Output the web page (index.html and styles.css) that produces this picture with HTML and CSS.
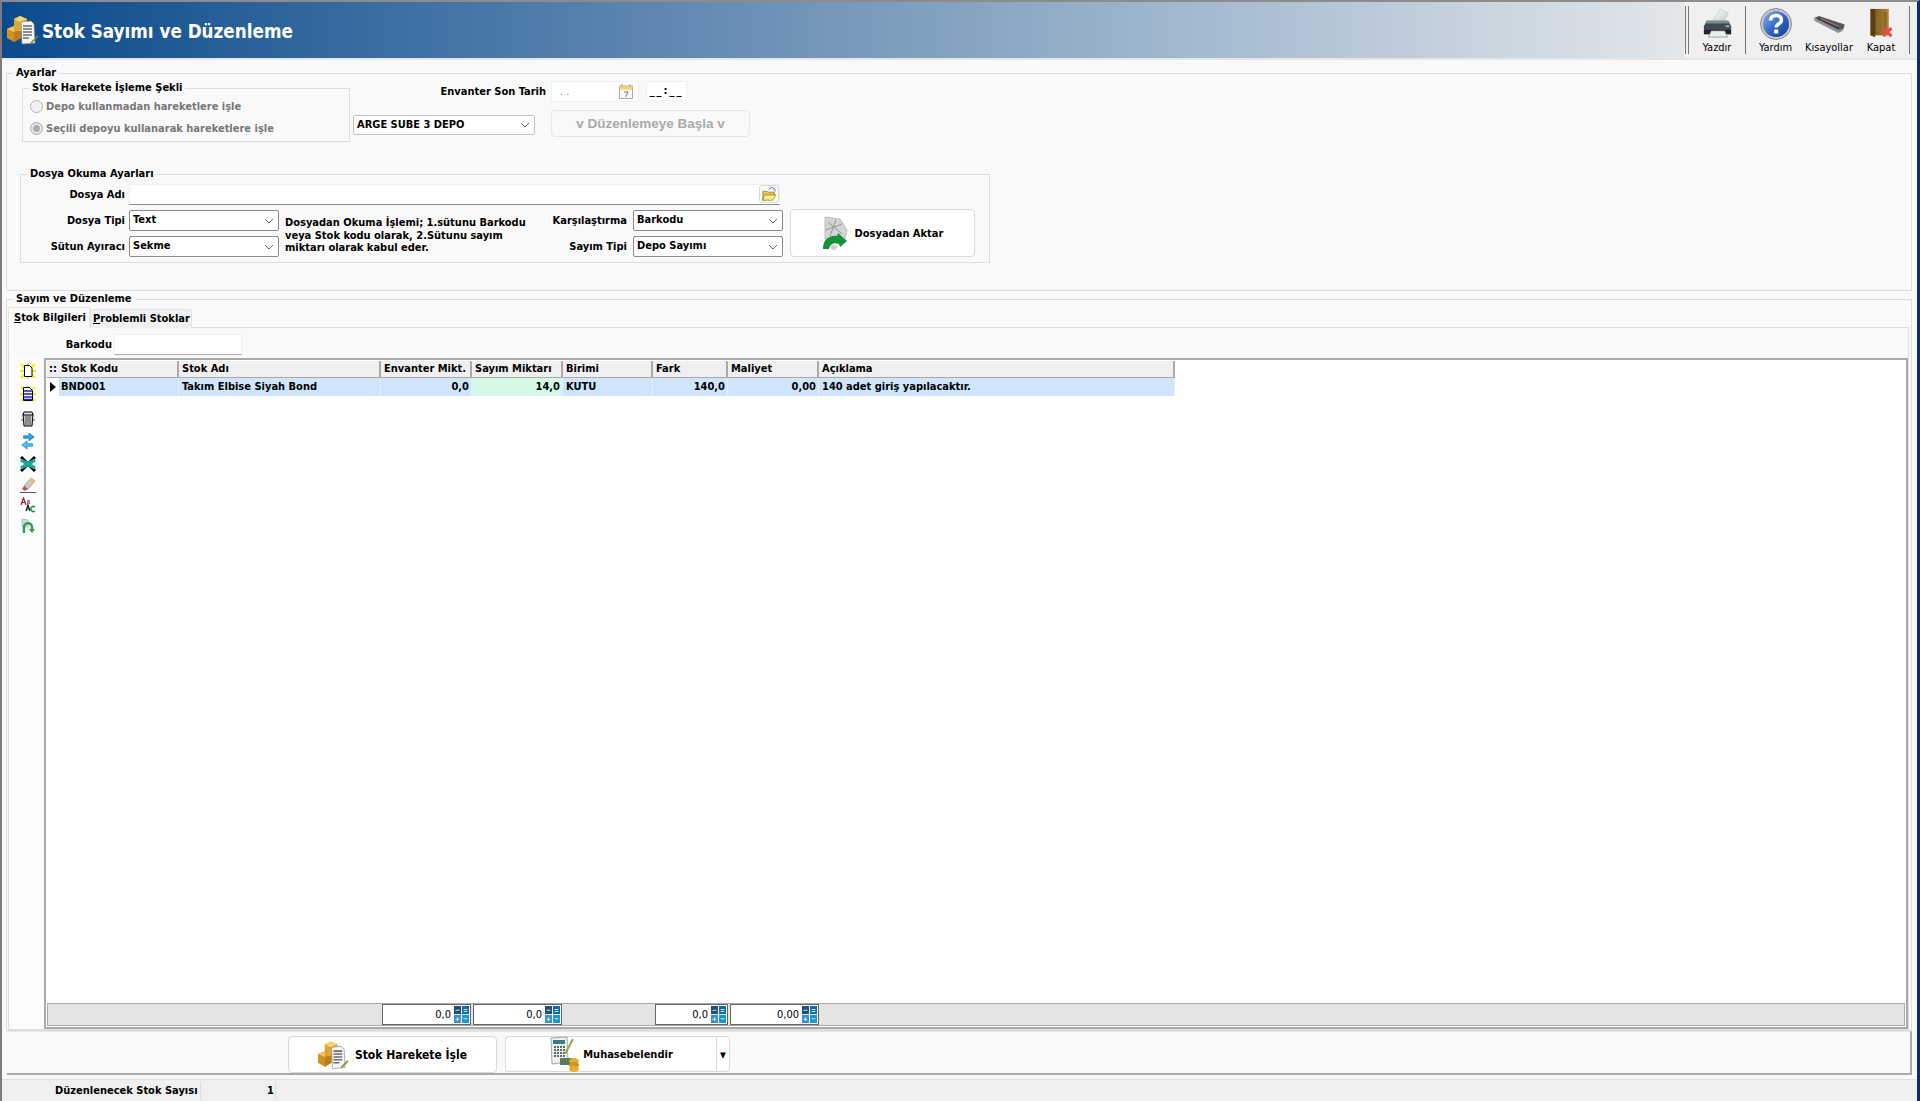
FILE: index.html
```html
<!DOCTYPE HTML>
<html>
<head>
<meta http-equiv="Content-Type" content="text/html; charset=utf-8">
<title>Stok Sayımı ve Düzenleme</title>
<link rel="stylesheet" href="styles.css">
</head>

<body>
<svg class="defs" width="0" height="0">
	<defs>
		<linearGradient id="gHelp" x1="0" y1="0" x2="1" y2="1"><stop offset="0" stop-color="#8fb4ea"/><stop offset=".55" stop-color="#2c62c4"/><stop offset="1" stop-color="#123c94"/></linearGradient>
		<linearGradient id="gDoor" x1="0" y1="0" x2="1" y2="0"><stop offset="0" stop-color="#6d4a14"/><stop offset="1" stop-color="#b58a3a"/></linearGradient>
		<linearGradient id="gPaper" x1="0" y1="0" x2="1" y2="1"><stop offset="0" stop-color="#fdfefe"/><stop offset="1" stop-color="#bccac6"/></linearGradient>
	</defs>
	<symbol id="iStok" viewBox="0 0 32 30">
		<path fill="#cf9224" d="M0 14l7-3 7 3v9l-7 4-7-4z"/>
		<path fill="#f2c65c" d="M0 14l7-3 7 3-7 3z"/>
		<path fill="#b97f1c" d="M7 17l7-3v9l-7 4z"/>
		<path fill="#dfa535" d="M7 4l6-3 7 3v12H7z"/>
		<path fill="#f6d475" d="M7 4l6-3 7 3-7 3z"/>
		<path fill="#f4f4f4" stroke="#8c8c8c" stroke-width=".7" d="M14 7l10-1 3 3 1 19-13 1z"/>
		<path stroke="#6b6b6b" stroke-width="1.6" d="M16 11h9M16 14h9M16 17h9M16 20h9M16 23h6"/>
		<path stroke="#7b8a3a" stroke-width="1.6" d="M24 28l7-7"/>
	</symbol>
	<symbol id="iPrint" viewBox="0 0 32 34">
		<path fill="url(#gPaper)" stroke="#a9b8b4" stroke-width=".6" d="M11 14L19 1l9 5-7 11z"/>
		<path fill="#3f4a52" d="M4 14h24l3 6v8H1v-8z"/>
		<path fill="#7c8990" d="M4 14h24l1 3H3z"/>
		<path fill="#1d252b" d="M1 24h30v5H1z"/>
		<path fill="#e8ecec" stroke="#555" stroke-width=".5" d="M9 25h15l3 7H6z"/>
		<path fill="#a9b4b8" d="M25 19h4v2h-4z"/>
	</symbol>
	<symbol id="iHelp" viewBox="0 0 32 32">
		<circle cx="16" cy="16" r="15.5" fill="#c9c9c9" stroke="#8a8a8a"/>
		<circle cx="16" cy="16" r="13" fill="url(#gHelp)"/>
		<path fill="none" stroke="#fff" stroke-width="3.6" d="M10.5 12.5c0-3.5 2.6-5 5.6-5s5.4 1.700 5.4 4.400c0 4-5.300 3.600-5.300 7.600"/>
		<rect x="14.200" y="21.500" width="4" height="4" fill="#fff"/>
	</symbol>
	<symbol id="iKeys" viewBox="0 0 34 20">
		<path fill="#55585c" d="M1 4l5-2 27 9-1 4-5 3z"/>
		<path fill="#8e9196" d="M1 4l26 13 5-2-1 3-5 2L1 7z"/>
		<path stroke="#c98080" stroke-width="1" d="M8 5l18 8"/>
		<path stroke="#2a2a2a" stroke-dasharray="2 1" stroke-width="1.500" d="M5 5l22 10"/>
	</symbol>
	<symbol id="iDoor" viewBox="0 0 26 34">
		<path fill="url(#gDoor)" d="M1 1h20v29H1z"/>
		<path fill="#5b3d10" d="M1 1h5v31l-5-2z"/>
		<path fill="#8f6a27" d="M8 4h5v22H8zM15 4h4v22h-4z"/>
		<path stroke="#e84b4b" stroke-width="3.400" d="M15 22l9 9M24 22l-9 9"/>
	</symbol>
	<symbol id="iCal" viewBox="0 0 14 15">
		<rect x=".5" y="2" width="13" height="12.500" fill="#fafafa" stroke="#a9a9a9"/>
		<rect x=".5" y="2" width="13" height="3.500" fill="#f2d27c"/>
		<path stroke="#b99a54" d="M3 0v3M11 0v3"/>
		<path fill="none" stroke="#777" d="M5 8h4l-2.500 5"/>
	</symbol>
	<symbol id="iFolder" viewBox="0 0 18 18">
		<path fill="#e9c94a" stroke="#8a7a2a" stroke-width=".8" d="M2 6h5l1 1h7v3l-11 6H2z"/>
		<path fill="#f8e98c" stroke="#8a7a2a" stroke-width=".8" d="M4 10h13l-4 6H2z"/>
		<path fill="none" stroke="#3552b5" stroke-width="1.100" d="M9 4c2-3 5-3 6 0l1 2"/>
	</symbol>
	<symbol id="iAktar" viewBox="0 0 26 34">
		<path fill="#d2d5d6" stroke="#a5a8a8" stroke-width=".7" d="M3 1l15 2 7 11-3 13-19-4z"/>
		<path stroke="#909595" d="M6 6l14 12M14 4l-6 16M4 14l16-6"/>
		<path fill="#17903b" d="M1 33c0-9 6-14 14-13l1-3 9 8-7 6-1-3c-6-2-9 1-10 5z"/>
		<path fill="#cfd2d2" d="M8 31l4-3 4 3-3 3h-3z"/>
	</symbol>
	<symbol id="iCalc" viewBox="0 0 14 20" preserveAspectRatio="none">
		<rect x="0" y="0" width="6.500" height="9.500" fill="#1c4f7c"/>
		<rect x="7.500" y="0" width="6.500" height="9.500" fill="#0e6ca8"/>
		<rect x="0" y="10.500" width="6.500" height="9.500" fill="#3e8fbf"/>
		<rect x="7.500" y="10.500" width="6.500" height="9.500" fill="#1597d4"/>
		<path stroke="#cfe8f5" stroke-width="1.200" d="M1.500 5h3.500M9 4h3.500M9 6.500h3.500M1.500 15.500h3.500M3.250 13.500v4M9 15h3.500"/>
	</symbol>
	<symbol id="iMuh" viewBox="0 0 32 36">
		<path fill="#eef1ee" stroke="#7f8a83" stroke-width=".7" d="M2 2l16-1 1 25-16 2z"/>
		<path fill="#3b7f86" d="M4 4h12v4H4z"/>
		<path stroke="#5f6b66" stroke-dasharray="2 1" stroke-width="2" d="M5 11h11M5 14h11M5 17h11M5 20h11"/>
		<path stroke="#86b04a" stroke-width="2" d="M16 18l8-15"/>
		<path fill="#5a7a58" d="M11 22h12v7H11z"/>
		<ellipse cx="25" cy="25" rx="5" ry="3" fill="#e6ac2d"/>
		<ellipse cx="25" cy="29" rx="5" ry="3" fill="#cf9224"/>
		<ellipse cx="25" cy="33" rx="5" ry="3" fill="#e6ac2d"/>
	</symbol>
</svg>

<div class="win">

	<div class="head">
		<div class="head-title">
			<svg class="head-icon"><use href="#iStok"/></svg>
			<h1>Stok Sayımı ve Düzenleme</h1>
		</div>
		<div class="tools">
			<div class="tool tool-first"><div class="tool-ico"><svg width="29" height="31"><use href="#iPrint"/></svg></div><span>Yazdır</span></div>
			<div class="tool tool-help"><div class="tool-ico"><svg width="32" height="32"><use href="#iHelp"/></svg></div><span>Yardım</span></div>
			<div class="tool tool-keys"><div class="tool-ico"><svg width="33" height="19"><use href="#iKeys"/></svg></div><span>Kısayollar</span></div>
			<div class="tool tool-last"><div class="tool-ico"><svg width="25" height="31"><use href="#iDoor"/></svg></div><span>Kapat</span></div>
		</div>
	</div>

	<div class="main">

		<div class="grp ayarlar">
			<span class="grp-title">Ayarlar</span>
			<div class="ayar-top">
				<div class="grp sekil">
					<span class="grp-title">Stok Harekete İşleme Şekli</span>
					<label class="radio"><i></i>Depo kullanmadan hareketlere işle</label>
					<label class="radio"><i class="on"></i>Seçili depoyu kullanarak hareketlere işle</label>
				</div>
				<div class="ayar-side">
					<div class="tarih-row">
						<span class="lbl lbl-tarih">Envanter Son Tarih</span>
						<div class="inp inp-tarih">. .<svg width="14" height="15"><use href="#iCal"/></svg></div>
						<div class="inp inp-saat">__:__</div>
					</div>
					<div class="depo-row">
						<div class="sel sel-depo is-off">ARGE SUBE 3 DEPO</div>
						<div class="btn btn-basla">v Düzenlemeye Başla v</div>
					</div>
				</div>
			</div>

			<div class="grp dosya">
				<span class="grp-title">Dosya Okuma Ayarları</span>
				<div class="frow">
					<span class="lbl lbl-a">Dosya Adı</span>
					<div class="inp inp-dosya"><div class="folder"><svg width="16" height="16"><use href="#iFolder"/></svg></div></div>
				</div>
				<div class="dosya-alt">
					<div class="fcol">
						<div class="frow"><span class="lbl lbl-a">Dosya Tipi</span><div class="sel">Text</div></div>
						<div class="frow"><span class="lbl lbl-a">Sütun Ayıracı</span><div class="sel">Sekme</div></div>
					</div>
					<p class="note">Dosyadan Okuma İşlemi; 1.sütunu Barkodu veya Stok kodu olarak, 2.Sütunu sayım miktarı olarak kabul eder.</p>
					<div class="fcol">
						<div class="frow"><span class="lbl lbl-b">Karşılaştırma</span><div class="sel">Barkodu</div></div>
						<div class="frow"><span class="lbl lbl-b">Sayım Tipi</span><div class="sel">Depo Sayımı</div></div>
					</div>
					<div class="btn btn-aktar"><svg width="26" height="34"><use href="#iAktar"/></svg>Dosyadan Aktar</div>
				</div>
			</div>
		</div>

		<div class="grp sayim">
			<span class="grp-title">Sayım ve Düzenleme</span>
			<div class="tabs">
				<div class="tab tab-on"><u>S</u>tok Bilgileri</div>
				<div class="tab"><u>P</u>roblemli Stoklar</div>
			</div>
			<div class="tab-panel">
				<div class="barkod-row">
					<span class="lbl lbl-barkod">Barkodu</span>
					<div class="inp inp-barkod"></div>
				</div>
				<div class="work">
					<ul class="side">
						<li><svg width="16" height="16" viewBox="0 0 16 16"><path stroke="#eef000" stroke-width="2" d="M1 1l14 14M15 1L1 15M8 0v16M0 8h16"/><path fill="#fff" stroke="#000" d="M4.500 2.500h5l2.500 2.500v8.500H4.500z"/></svg></li>
						<li><svg width="16" height="16" viewBox="0 0 16 16"><path stroke="#eef000" stroke-width="2" d="M1 1l14 14M15 1L1 15M8 0v16M0 8h16"/><path fill="#fff" stroke="#000" d="M3.500 1.500h6l3 3v10h-9z"/><path stroke="#1c22c8" stroke-width="1.500" d="M4 5h8M4 8h8M4 11h8M4 13.500h8"/></svg></li>
						<li><svg width="16" height="16" viewBox="0 0 16 16"><path fill="#c8c8c8" stroke="#000" d="M3 3h10l-1 12H4z"/><path fill="#e4e4e4" stroke="#000" d="M4 1h8l1 3H3z"/><path stroke="#333" stroke-width=".8" d="M6 5v9M8 5v9M10 5v9M1 9h2M13 9h2"/></svg></li>
						<li><svg width="16" height="16" viewBox="0 0 16 18"><path fill="#22a7e8" stroke="#0a5a9a" stroke-width=".6" d="M3 3h6V0l6 4.500L9 9V6H3z"/><path fill="#48c1f4" stroke="#0a5a9a" stroke-width=".6" d="M13 12H7V9l-6 4.500L7 18v-3h6z"/></svg></li>
						<li><svg width="16" height="16" viewBox="0 0 16 16"><path stroke="#000" stroke-width="3" d="M1 1l14 14M15 1L1 15"/><path stroke="#17a8a0" stroke-width="3.400" d="M1 4l14 8M15 4L1 12"/></svg></li>
						<li><svg width="16" height="16" viewBox="0 0 16 16"><path fill="#c9c9c9" stroke="#777" stroke-width=".6" d="M11 1l4 3-7 8-4-3z"/><path fill="#efc24e" d="M11 1l4 3-2 2-4-3z"/><path fill="#c6534a" d="M4 9l4 3-3 2-3-2z"/><path stroke="#555" d="M0 15.500h16"/></svg></li>
						<li><svg width="16" height="16" viewBox="0 0 16 16"><path fill="none" stroke="#b01020" stroke-width="1.200" d="M1 8l2.500-7L6 8M2 5.500h3"/><path stroke="#1a1aa8" stroke-width="1.200" d="M7 4h3M7 6h3"/><path fill="none" stroke="#111" stroke-width="1.200" d="M6 14l2-6 2 6M7 12h2"/><path fill="none" stroke="#1a9a3a" stroke-width="1.500" d="M15 10a2.500 2.500 0 1 0 0 4"/></svg></li>
						<li><svg width="16" height="16" viewBox="0 0 16 16"><path fill="#c9dfe0" stroke="#8aa" stroke-width=".6" d="M2 1l6 1v7H2z"/><path fill="none" stroke="#2ca04a" stroke-width="2.400" d="M4 15V9c0-5 8-5 8 0v4"/><path fill="#2ca04a" d="M9 11h6l-3 4z"/></svg></li>
					</ul>
					<div class="grid">
						<div class="grid-body">
							<table class="tbl">
								<colgroup>
									<col class="c0"><col class="c1"><col class="c2"><col class="c3"><col class="c4"><col class="c5"><col class="c6"><col class="c7"><col class="c8">
								</colgroup>
								<tr class="tbl-head">
									<th class="ind">::</th><th class="first">Stok Kodu</th><th>Stok Adı</th><th>Envanter Mikt.</th><th>Sayım Miktarı</th><th>Birimi</th><th>Fark</th><th>Maliyet</th><th>Açıklama</th>
								</tr>
								<tr class="tbl-row">
									<td class="ind"><i class="arrow"></i></td><td class="first">BND001</td><td>Takım Elbise Siyah Bond</td><td class="num">0,0</td><td class="num sayim-cell">14,0</td><td>KUTU</td><td class="num">140,0</td><td class="num">0,00</td><td>140 adet giriş yapılacaktır.</td>
								</tr>
							</table>
						</div>
						<div class="sum">
							<div class="sum-box sum-first">0,0<svg width="15" height="17"><use href="#iCalc"/></svg></div>
							<div class="sum-box">0,0<svg width="15" height="17"><use href="#iCalc"/></svg></div>
							<div class="sum-box sum-fark">0,0<svg width="15" height="17"><use href="#iCalc"/></svg></div>
							<div class="sum-box">0,00<svg width="15" height="17"><use href="#iCalc"/></svg></div>
						</div>
					</div>
				</div>
			</div>
		</div>

		<div class="islem">
			<div class="btn btn-isle"><svg width="31" height="30"><use href="#iStok"/></svg>Stok Harekete İşle</div>
			<div class="btn btn-muh"><svg width="32" height="36"><use href="#iMuh"/></svg>Muhasebelendir</div>
			<div class="btn btn-ok">▾</div>
		</div>

		<div class="status">
			<span class="status-lbl">Düzenlenecek Stok Sayısı</span>
			<span class="status-num">1</span>
		</div>

	</div>
</div>
</body>
</html>
```

FILE: styles.css
```css
/* reset start */
html,body{ overflow:hidden; height:100%;}
body,h1,p,ul{ padding:0; margin:0;}
li{ list-style:none;}
body{ font:bold 11px "DejaVu Sans","Liberation Sans",sans-serif; font-stretch:condensed; color:#000; background:#f0f0f0;}
svg{ display:block; flex:none;}
.defs{ position:absolute;}
/* reset end */

/* frame start */
.win{ width:1920px; height:1101px; box-sizing:border-box; display:flex; flex-direction:column; border-top:2px solid #8c8c8c; border-left:2px solid #7c7c7c; border-right:3px solid #0c2a78;}
.main{ flex:1; background:#f9f9f9; border-top:2px solid #e6e6e6; display:flex; flex-direction:column; min-height:0;}
/* frame end */

/* head start */
.head{ height:56px; display:flex; flex:none;}
.head-title{ flex:1; display:flex; align-items:center; background:linear-gradient(90deg,#0a4a8c,#e2e7ea); padding-left:5px;}
.head-icon{ width:32px; height:30px;}
h1{ font-size:18.7px; font-weight:bold; color:#fff; margin:2px 0 0 3px;}
.tools{ width:233px; display:flex; background:#f0f0f0; padding:4px 0; box-sizing:border-box; font-weight:normal;}
.tool{ display:flex; flex-direction:column; align-items:center;}
.tool-ico{ height:35px; display:flex; align-items:center; justify-content:center;}
.tool span{ line-height:13px;}
.tool-first{ width:56px; margin-left:1px; border-left:4px double #777; border-right:1px solid #777;}
.tool-help{ width:59px;}
.tool-keys{ width:48px;}
.tool-last{ width:56px; border-right:1px solid #777;}
/* head end */

/* common start */
.grp{ border:1px solid #dedede; position:relative; box-sizing:border-box;}
.grp-title{ position:absolute; left:6px; top:-8px; background:#f9f9f9; padding:0 3px; line-height:14px; white-space:nowrap;}
.lbl{ text-align:right; flex:none;}
.inp{ background:#fff; border:1px solid #f0f0f0; box-sizing:border-box;}
.sel{ width:150px; height:21px; box-sizing:border-box; background:#fff url("data:image/svg+xml,%3Csvg xmlns='http://www.w3.org/2000/svg' width='10' height='6'%3E%3Cpath fill='none' stroke='%23666' d='M1 1l4 4 4-4'/%3E%3C/svg%3E") no-repeat right 4px center; border:1px solid #8a8a8a; border-radius:2px; padding:0 3px; line-height:18px;}
.btn{ background:#fff; border:1px solid #d8d8d8; border-radius:4px; box-sizing:border-box; display:flex; align-items:center; justify-content:center;}
.frow{ display:flex; align-items:center;}
.fcol{ display:flex; flex-direction:column; gap:5px; margin-top:1px;}
/* common end */

/* ayarlar start */
.ayarlar{ margin:13px 0 0 4px; width:1906px; height:218px; flex:none;}
.ayar-top{ display:flex; margin:7px 0 0 15px;}
.sekil{ width:328px; height:54px; margin-top:7px; padding:6px 0 0 7px; color:#777;}
.sekil .grp-title{ color:#000;}
.radio{ display:flex; align-items:center; height:22px;}
.radio i{ width:13px; height:13px; box-sizing:border-box; border:1px solid #b5b5b5; border-radius:50%; background:#f2f2f2; margin-right:3px;}
.radio i.on{ background:#ababab; box-shadow:inset 0 0 0 2px #e8e8e8;}
.ayar-side{ margin-left:3px;}
.tarih-row{ display:flex;}
.lbl-tarih{ width:193px; margin-right:5px; line-height:22px;}
.inp-tarih{ width:88px; height:21px; margin-right:7px; display:flex; align-items:center; justify-content:space-between; padding:0 5px 0 8px; color:#888; font-weight:normal;}
.inp-saat{ width:41px; height:20px; text-align:center; line-height:18px; letter-spacing:2px;}
.depo-row{ display:flex; align-items:flex-start; margin-top:7px;}
.sel-depo{ width:182px; height:20px; margin:5px 16px 0 0;}
.is-off{ border-color:#c4c4c4;}
.btn-basla{ width:199px; height:27px; color:#aaa; font-size:13.5px; font-stretch:normal; font-family:"Liberation Sans",sans-serif; background:#f9f9f9; border-color:#e6e6e6;}
/* ayarlar end */

/* dosya start */
.dosya{ margin:32px 0 0 13px; width:970px; height:89px; padding:9px 0 0 0;}
.lbl-a{ width:104px; margin-right:4px;}
.lbl-b{ width:97px; margin-right:6px;}
.inp-dosya{ width:651px; height:21px; border-bottom:1px solid #8a8a8a; display:flex; justify-content:flex-end;}
.folder{ width:20px; height:18px; background:#fbfbf6; border:1px solid #d8d8d8; border-radius:3px; box-sizing:border-box; display:flex; align-items:center; justify-content:center;}
.dosya-alt{ display:flex; margin-top:4px;}
.note{ width:245px; margin:8px 0 0 6px; line-height:12.5px;}
.btn-aktar{ width:185px; height:48px; margin-left:7px; gap:7px;}
/* dosya end */

/* sayim start */
.sayim{ margin:8px 0 0 4px; width:1906px; height:732px; flex:none; display:flex; flex-direction:column;}
.tabs{ display:flex; margin:7px 0 0 1px; height:21px; align-items:flex-end; position:relative; z-index:1;}
.tab{ height:19px; line-height:18px; padding:0 2px; background:#f0f0f0; border:1px solid #e4e4e4; border-bottom:none; box-sizing:border-box; width:102px; white-space:nowrap;}
.tab-on{ height:21px; width:82px; background:#f9f9f9; padding:0 5px; line-height:19px;}
.tab-panel{ flex:1; border:1px solid #dedede; margin:-1px 0 0 1px; width:1901px; box-sizing:border-box; display:flex; flex-direction:column; padding-top:6px;}
.barkod-row{ display:flex; align-items:center; height:21px;}
.lbl-barkod{ width:103px; margin-right:2px;}
.inp-barkod{ width:128px; height:21px; border-bottom:1px solid #aaa;}
.work{ flex:1; display:flex; margin:3px 0 0 3px; min-height:0;}
.side{ width:32px; background:#fcfcfc; padding-top:5px; display:grid; grid-template-rows:23px 25px 22px 23px 21px 20px 21px 21px; align-content:start; justify-items:center; box-sizing:border-box; flex:none;}
/* sayim end */

/* grid start */
.grid{ flex:1; border:2px solid #aaa; background:#fff; box-sizing:border-box; display:flex; flex-direction:column; padding:1px 1px 1px 1px; width:1864px;}
.grid-body{ flex:1;}
.tbl{ border-collapse:separate; border-spacing:0; table-layout:fixed; width:1128px;}
.c0{ width:12px;} .c1{ width:120px;} .c2{ width:202px;} .c3{ width:91px;} .c4{ width:91px;} .c5{ width:90px;} .c6{ width:75px;} .c7{ width:91px;} .c8{ width:356px;}
.tbl th,.tbl td{ padding:0 2px 1px 3px; white-space:nowrap; overflow:hidden;}
.tbl th{ height:17px; box-sizing:border-box; background:#efefef; text-align:left; font-weight:bold; border-right:2px solid #aaa; border-bottom:1px solid #aaa; line-height:14px;}
.tbl th.ind{ padding:0; text-align:center; border-right:none;}
.tbl th.first,.tbl td.first{ padding-left:2px;}
.tbl td{ height:18px; box-sizing:border-box; background:#d0e5fc; border-right:1px solid #e4effb; line-height:16px;}
.tbl td.ind{ background:#fff; padding:0 0 0 3px; border:none;}
.tbl td.num{ text-align:right;}
.tbl td.sayim-cell{ background:#d4f9e8;}
.arrow{ display:block; width:0; height:0; border-left:6px solid #000; border-top:5px solid transparent; border-bottom:5px solid transparent;}
.sum{ height:23px; flex:none; background:#e4e4e4; border:1px solid #aaa; display:flex; align-items:center; box-sizing:border-box; box-shadow:0 0 0 1px #fff;}
.sum-box{ width:89px; height:21px; box-sizing:border-box; background:#fff; border:1px solid #666; margin-right:2px; display:flex; align-items:center; justify-content:flex-end; gap:3px; font-weight:normal; padding-right:1px;}
.sum-first{ margin-left:334px;}
.sum-fark{ width:73px; margin-left:91px;}
/* grid end */

/* islem start */
.islem{ height:44px; flex:none; margin-left:5px; width:1905px; box-sizing:border-box; border-top:1px solid #e6e6e6; border-right:2px solid #aaa; border-bottom:2px solid #aaa; padding:4px 0 0 281px; display:flex; align-items:flex-start;}
.btn-isle{ width:209px; height:37px; gap:6px; font-size:12px; font-weight:bold; margin-right:8px;}
.btn-muh{ width:211px; height:36px; gap:2px; border-radius:4px 0 0 4px; border-right:none;}
.btn-ok{ width:14px; height:36px; border-radius:0 4px 4px 0; font-size:13px;}
/* islem end */

/* status start */
.status{ flex:1; margin-top:4px; background:#efefef; border-top:1px solid #e0e0e0; display:flex; align-items:center;}
.status-lbl{ width:199px; padding-left:53px; box-sizing:border-box; border-right:1px solid #ddd; line-height:17px;}
.status-num{ width:75px; text-align:right; box-sizing:border-box; padding-right:1px; border-right:1px solid #ddd; line-height:17px;}
/* status end */
```
